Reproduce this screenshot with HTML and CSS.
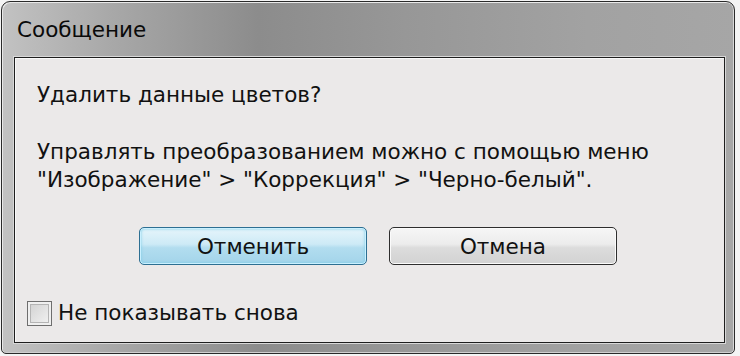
FILE: index.html
```html
<!DOCTYPE html>
<html lang="ru">
<head>
<meta charset="utf-8">
<link rel="stylesheet" href="styles.css">
</head>
<body>
<div class="window">
  <div class="titlebar">Сообщение</div>
  <div class="panel">
    <p class="question">Удалить данные цветов?</p>
    <p class="info">Управлять преобразованием можно с помощью меню<br>"Изображение" &gt; "Коррекция" &gt; "Черно-белый".</p>
    <div class="buttons">
      <button class="btn btn-default">Отменить</button>
      <button class="btn">Отмена</button>
    </div>
    <label class="check"><span class="box"></span><span>Не показывать снова</span></label>
  </div>
</div>
</body>
</html>
```

FILE: styles.css
```css
html, body {
  margin: 0;
  padding: 0;
  background: #f4f4f4;
}
body {
  width: 740px;
  height: 356px;
  overflow: hidden;
  font-family: "DejaVu Sans", Verdana, sans-serif;
  color: #111;
}
.window {
  margin: 1px 0 0 1px;
  width: 734px;
  height: 353px;
  box-sizing: border-box;
  border: 1px solid #2a2a2a;
  border-radius: 9px 9px 5px 5px;
  background: linear-gradient(90deg, #c2c2c2 0%, #a8a8a8 15%, #8c8c8c 35%, #979797 55%, #a2a2a2 80%, #a6a6a6 100%);
  box-shadow: inset 1px 1px 0 #e8e8e8, inset -1px 0 0 #d8d8d8, inset 0 -1px 0 #d0d0d0;
  display: flex;
  flex-direction: column;
  padding: 0 9px 10px 12px;
}
.titlebar {
  height: 55px;
  box-sizing: border-box;
  padding: 14px 0 0 3px;
  font-size: 21.5px;
  line-height: 28px;
  color: #0a0a0a;
}
.panel {
  flex: 1;
  background: #ebe9e9;
  border: 1px solid #1e1e1e;
  box-shadow: 0 0 0 1px #d8d8d8, inset 1px 1px 0 #fafafa;
  padding: 0 0 0 22px;
  display: flex;
  flex-direction: column;
}
.question {
  margin: 23px 0 0 0;
  font-size: 21.5px;
  line-height: 28px;
}
.info {
  margin: 29px 0 0 0;
  font-size: 21.5px;
  line-height: 28px;
}
.buttons {
  display: flex;
  gap: 22px;
  margin: 33px 0 0 102px;
}
.btn {
  width: 228px;
  height: 38px;
  box-sizing: border-box;
  border: 1px solid #2e2e2e;
  border-radius: 5px;
  background: linear-gradient(180deg, #f6f6f6 0%, #ececec 45%, #dcdcdc 55%, #d2d2d2 100%);
  box-shadow: inset 0 0 0 1px #fbfbfb;
  font-family: "DejaVu Sans", Verdana, sans-serif;
  font-size: 21.5px;
  color: #111;
  padding: 0;
}
.btn-default {
  border-color: #2d6f92;
  background: linear-gradient(180deg, #e6f5fb 0%, #cdeaf6 45%, #b2ddef 55%, #a3d4ea 100%);
  box-shadow: inset 0 0 0 1px #c9f0ff, inset 0 0 3px 1px #7ccbe6;
}
.check {
  display: flex;
  align-items: center;
  gap: 6px;
  margin: 35px 0 0 -10px;
  font-size: 21.5px;
  line-height: 26px;
}
.box {
  width: 25px;
  height: 25px;
  box-sizing: border-box;
  border: 1px solid #6e6e6e;
  background: linear-gradient(135deg, #cfcfcf 0%, #f4f4f4 100%);
  box-shadow: inset 0 0 0 2px #f0f0f0, inset 0 0 0 3px #b4b4b4;
}
```
